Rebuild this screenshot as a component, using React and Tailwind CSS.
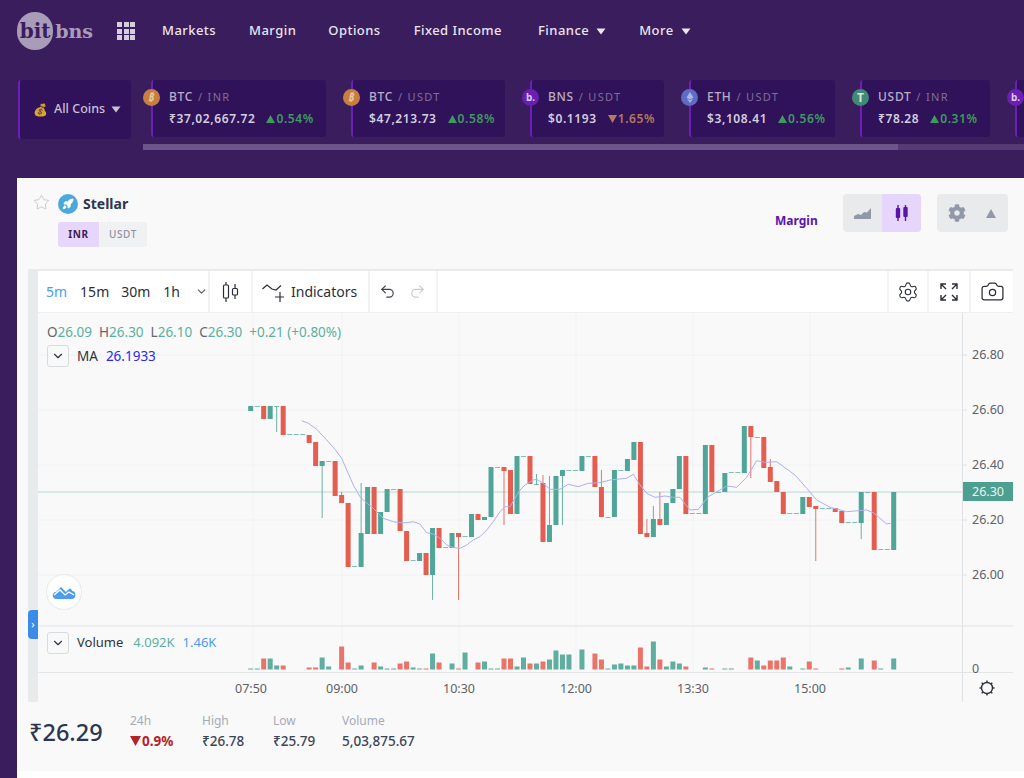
import React from "react";
import { ChevronDown, Settings, Camera, Undo2, Redo2, Star, Rocket } from "lucide-react";
import { FaCog } from "react-icons/fa";

const UI = '"Noto Sans", sans-serif';

// [colour, bodyTop, bodyBottom, wickTop, wickBottom]
const candles = [
  ["g", 406, 411], ["g", 406, 407], ["r", 406, 419], ["g", 406, 419], ["g", 406, 407, 406, 432], ["r", 406, 435],
  ["g", 434, 435], ["g", 434, 435], ["g", 434, 435], ["r", 435, 443], ["r", 442, 466], ["g", 461, 466, 461, 518],
  ["g", 461, 462], ["r", 461, 496], ["r", 495, 503, 492, 503], ["r", 503, 567], ["g", 566, 567], ["g", 533, 567, 483, 567],
  ["g", 487, 534], ["r", 487, 534], ["g", 512, 534], ["g", 489, 512], ["g", 489, 490], ["r", 489, 531],
  ["r", 531, 561], ["g", 560, 561], ["g", 553, 561], ["r", 553, 575], ["g", 528, 575, 528, 600], ["r", 528, 548],
  ["g", 547, 548], ["g", 533, 548], ["r", 533, 537, 533, 600], ["g", 536, 537], ["g", 514, 537], ["r", 514, 520],
  ["g", 517, 520], ["g", 467, 517], ["g", 467, 468], ["r", 467, 471, 467, 525], ["r", 470, 514], ["g", 456, 514],
  ["g", 456, 457], ["r", 456, 484], ["g", 484, 485, 474, 485], ["r", 483, 542, 475, 542], ["g", 525, 542, 476, 542], ["g", 476, 525],
  ["g", 470, 476, 470, 525], ["g", 470, 471], ["g", 470, 471], ["g", 456, 471], ["g", 456, 457], ["r", 456, 487],
  ["r", 487, 517, 470, 517], ["g", 517, 518], ["g", 470, 517], ["g", 470, 471], ["g", 459, 471], ["g", 442, 460],
  ["r", 442, 534], ["r", 533, 537, 519, 537], ["g", 519, 537, 506, 537], ["r", 519, 525, 492, 525], ["g", 503, 525], ["g", 489, 503],
  ["g", 456, 489], ["r", 456, 514], ["g", 513, 514], ["g", 513, 514], ["g", 445, 514], ["r", 445, 492],
  ["g", 492, 493], ["g", 473, 492], ["g", 472, 473], ["g", 472, 473], ["g", 426, 473], ["r", 426, 437, 426, 478],
  ["g", 437, 438], ["r", 437, 468], ["r", 467, 482, 459, 482], ["r", 481, 492], ["r", 492, 514], ["g", 513, 514],
  ["g", 513, 514], ["g", 497, 514], ["r", 497, 507], ["r", 506, 509, 506, 561], ["g", 508, 509], ["g", 508, 509],
  ["r", 508, 512], ["r", 511, 523], ["g", 522, 523], ["g", 522, 523], ["g", 492, 523, 492, 539], ["g", 492, 493],
  ["r", 492, 550], ["g", 549, 550], ["g", 549, 550], ["g", 492, 550],
];

// candle index, colour, height
const volume = [
  [0, "g", 1], [1, "g", 1], [2, "r", 11], [3, "g", 11], [4, "g", 4], [5, "r", 4], [9, "r", 2], [10, "r", 2],
  [11, "g", 12], [12, "g", 3], [14, "r", 23], [15, "r", 7], [16, "g", 1], [17, "g", 4], [19, "r", 7], [20, "g", 3],
  [21, "g", 1], [22, "g", 1], [23, "r", 6], [24, "r", 8], [25, "g", 2], [26, "g", 1], [27, "r", 1], [28, "g", 16],
  [29, "r", 7], [31, "g", 6], [32, "r", 1], [33, "g", 17], [35, "r", 7], [36, "g", 8], [37, "g", 1], [38, "g", 1],
  [39, "r", 11], [40, "r", 11], [41, "g", 3], [42, "g", 12], [43, "r", 6], [44, "g", 6], [45, "r", 8], [46, "g", 10],
  [47, "g", 19], [48, "g", 15], [49, "g", 15], [51, "g", 20], [53, "r", 16], [54, "r", 10], [55, "g", 1], [56, "g", 5],
  [57, "g", 6], [58, "g", 4], [59, "g", 4], [60, "r", 22], [61, "r", 3], [62, "g", 28], [63, "r", 10], [64, "g", 3],
  [65, "g", 8], [66, "g", 6], [67, "r", 3], [70, "g", 2], [71, "r", 1], [73, "g", 1], [74, "g", 1], [77, "r", 12],
  [78, "g", 9], [79, "r", 4], [80, "r", 9], [81, "r", 9], [82, "r", 12], [83, "g", 3], [85, "g", 1], [86, "r", 8],
  [87, "r", 1], [91, "r", 1], [92, "g", 2], [94, "g", 11], [96, "r", 9], [97, "g", 1], [99, "g", 11],
];

const maLine =
  "301.7,420.7 308.3,423.3 316.7,429.3 326.7,440 335,449.3 341.7,458.3 346.7,470 353.3,485 360,496.7 365,501.7 373.3,508.3 383.3,518.3 393.3,521.7 400,522.7 406.7,522.7 413.3,521.7 420,524 426.7,532.7 433.3,534 440,538.3 446.7,545 453.3,547.7 460,548.3 466.7,545 473.3,540 480,536.7 486.7,530 493.3,521.7 500,511.7 505,506.7 510,506.7 520,490 525,485 533.3,480 536.7,479.3 543.3,483.3 550,489.3 560,489.3 568.3,484.3 578.3,486.7 588.3,483.3 600,482.7 610,480 626.7,478.3 633.3,474.3 640,485 646.7,493.3 655,497.3 665,496 673.3,497.3 680,497.3 690,510 698.3,509.3 708.3,496.7 720,490 726.7,486 736.7,487.3 746.7,477.3 756.7,460.7 765,462.3 776.7,461.7 795,475 806.7,488.3 816.7,500 830,507.3 846.7,511.7 866.7,510 873.3,512.7 886.7,524 890.7,523.3";

const GREEN = "#4fa597";
const RED = "#e35d50";
const candleX = (i) => 250.7 + 6.495 * i;

const tickers = [
  { base: "BTC", quote: "INR", price: "₹37,02,667.72", pct: "0.54%", up: true, coin: "btc", w: "w-[175px]" },
  { base: "BTC", quote: "USDT", price: "$47,213.73", pct: "0.58%", up: true, coin: "btc", w: "w-[154px]" },
  { base: "BNS", quote: "USDT", price: "$0.1193", pct: "1.65%", up: false, coin: "bns", w: "w-[134px]" },
  { base: "ETH", quote: "USDT", price: "$3,108.41", pct: "0.56%", up: true, coin: "eth", w: "w-[146px]" },
  { base: "USDT", quote: "INR", price: "₹78.28", pct: "0.31%", up: true, coin: "usdt", w: "w-[130px]" },
  { base: "", quote: "", price: "", pct: "", up: true, coin: "bns", w: "w-[60px]" },
];

const CoinIcon = ({ coin }) => {
  if (coin === "btc")
    return (
      <span className="flex h-[17px] w-[17px] items-center justify-center rounded-full bg-[#c77f3f] text-[10px] font-bold italic text-[#e9c9a4]">₿</span>
    );
  if (coin === "eth")
    return (
      <span className="flex h-[17px] w-[17px] items-center justify-center rounded-full bg-[#5d6cc4]">
        <svg viewBox="0 0 10 14" className="h-[11px] w-[8px]">
          <path d="M5 0 L9.5 7 L5 9.5 L0.5 7 Z M5 10.6 L9 8.2 L5 14 L1 8.2 Z" fill="#aab4e6" />
        </svg>
      </span>
    );
  if (coin === "usdt")
    return (
      <span className="flex h-[17px] w-[17px] items-center justify-center rounded-full bg-[#3f8a74] text-[12px] font-bold text-[#d4e6de]">T</span>
    );
  return (
    <span className="flex h-[17px] w-[17px] items-center justify-center rounded-full bg-[#6a1fb0] text-[10px] font-bold text-[#d9c8ee]">b.</span>
  );
};

const Caret = ({ className }) => (
  <svg viewBox="0 0 10 7" className={className}>
    <path d="M0.5 0.5 H9.5 L5 6.5 Z" fill="currentColor" />
  </svg>
);

const Ticker = ({ t }) => (
  <div className={`relative h-[57px] shrink-0 rounded-[3px] border-l-2 border-[#6a20b5] bg-[#30125a] pl-4 pt-[8px] ${t.w}`}>
    <div className="absolute left-[-10px] top-[9px]">
      <CoinIcon coin={t.coin} />
    </div>
    {t.base && (
      <>
        <div className="text-[12px] font-medium leading-[18px] tracking-[0.06em] text-[#b9aec8]">
          {t.base} <span className="ml-[1px] text-[11px] font-normal tracking-[0.12em] text-[#7f6f96]">/ {t.quote}</span>
        </div>
        <div className="mt-[4px] flex items-center gap-[11px] whitespace-nowrap text-[12px] font-semibold leading-[18px] tracking-[0.05em] text-[#d3cede]">
          {t.price}
          <span className={`flex items-center gap-[1px] ${t.up ? "text-[#3f9a5e]" : "text-[#b57a5c]"}`}>
            <svg viewBox="0 0 8 7" className="h-[8px] w-[9px]">
              <path d={t.up ? "M4 0 L8 7 H0 Z" : "M0 0 H8 L4 7 Z"} fill="currentColor" />
            </svg>
            {t.pct}
          </span>
        </div>
      </>
    )}
  </div>
);

const ToolCell = ({ className, children }) => (
  <div className={`flex h-full items-center border-r-2 border-[#f1f3f4] ${className}`}>{children}</div>
);

const CollapseBtn = () => (
  <span className="flex h-[22px] w-[22px] items-center justify-center rounded-[3px] border border-[#d8dbdf] bg-[#f8f9f9]">
    <ChevronDown size={14} strokeWidth={2} className="text-[#2f3340]" />
  </span>
);

const ChartCanvas = () => (
  <svg viewBox="38 313 975 389" className="block h-[389px] w-[975px]">
    {/* grid */}
    {[355, 410, 465, 520, 575].map((y) => (
      <line key={y} x1="38" x2="962" y1={y} y2={y} stroke="#f0f3f4" />
    ))}
    {[253, 342, 459, 576, 693, 810].map((x) => (
      <line key={x} x1={x} x2={x} y1="313" y2="672" stroke="#eef2f4" />
    ))}
    {/* last price line */}
    <line x1="38" x2="962" y1="492" y2="492" stroke="#b3dcd2" />

    {/* candles */}
    {candles.map(([c, top, bot, wt, wb], i) => {
      const x = candleX(i);
      const fill = c === "g" ? GREEN : RED;
      const doji = bot - top <= 1;
      return (
        <g key={i}>
          {wt !== undefined && <line x1={x} x2={x} y1={wt} y2={wb} stroke={fill} strokeOpacity="0.85" />}
          <rect x={x - 2.5} y={top} width="5" height={bot - top} fill={fill} fillOpacity={doji ? 0.7 : 1} />
        </g>
      );
    })}
    <polyline points={maLine} fill="none" stroke="#aeb0f0" strokeWidth="1" />

    {/* volume pane */}
    {volume.map(([i, c, h]) => (
      <rect key={i} x={candleX(i) - 2.5} y={669.5 - h} width="5" height={h} fill={c === "g" ? "#5fae9f" : "#e8746a"} />
    ))}
    <line x1="38" x2="1013" y1="626" y2="626" stroke="#dfe2e4" />
    <line x1="38" x2="1013" y1="672.5" y2="672.5" stroke="#e3e5e7" />
    <line x1="962.5" x2="962.5" y1="313" y2="702" stroke="#dfe2e4" />

    {/* price scale */}
    {[
      ["26.80", 355],
      ["26.60", 410],
      ["26.40", 465],
      ["26.20", 520],
      ["26.00", 575],
    ].map(([label, y]) => (
      <g key={label}>
        <line x1="962" x2="967" y1={y} y2={y} stroke="#dfe2e4" />
        <text x="972" y={y + 4} fontSize="12.5" fill="#5e6168" fontFamily={UI}>{label}</text>
      </g>
    ))}
    <rect x="963" y="482" width="50" height="19" fill="#4d9f8f" />
    <text x="972" y="496" fontSize="12.5" fill="#eaf5f2" fontFamily={UI}>26.30</text>
    <text x="972" y="673" fontSize="12.5" fill="#5e6168" fontFamily={UI}>0</text>

    {/* time scale */}
    {[
      ["07:50", 251],
      ["09:00", 342],
      ["10:30", 459],
      ["12:00", 576],
      ["13:30", 693],
      ["15:00", 810],
    ].map(([label, x]) => (
      <text key={label} x={x} y="693" textAnchor="middle" fontSize="12.5" fill="#5e6168" fontFamily={UI}>{label}</text>
    ))}
    {/* sun icon */}
    <g transform="translate(987 688)" stroke="#2f3340" fill="none" strokeWidth="1.4">
      <circle r="5.5" />
      {[0, 45, 90, 135, 180, 225, 270, 315].map((a) => (
        <line key={a} x1="0" y1="-5.5" x2="0" y2="-7.5" transform={`rotate(${a})`} />
      ))}
    </g>
  </svg>
);

const Stat = ({ label, value, className }) => (
  <div className={className}>
    <div className="text-[12px] leading-[16px] text-[#a5abb8]">{label}</div>
    <div className="mt-[3px] text-[13.5px] font-medium leading-[18px] text-[#3c4456]">{value}</div>
  </div>
);

export default function App() {
  return (
    <div className="h-[778px] w-[1024px] overflow-hidden bg-[#3a1d5c]" style={{ fontFamily: UI }}>
      {/* nav */}
      <nav className="flex h-[62px] items-center pl-[17px]">
        <div className="flex w-[76px] items-center">
          <span className="flex h-[38px] w-[38px] items-center justify-center rounded-full bg-[#a99cb9] text-[20px] font-bold text-[#3a1d5c]" style={{ fontFamily: '"DejaVu Serif", serif' }}>bit</span>
          <span className="ml-[2px] text-[19px] font-bold text-[#a99cb9]" style={{ fontFamily: '"DejaVu Serif", serif' }}>bns</span>
        </div>
        <div className="ml-[24px] grid grid-cols-3 gap-[1.5px]">
          {Array.from({ length: 9 }).map((_, i) => (
            <span key={i} className="h-[5px] w-[5px] bg-[#d5cfdd]" />
          ))}
        </div>
        <div className="ml-[27px] flex items-center gap-[33px] text-[13px] font-medium tracking-[0.035em] text-[#e9e5ef]">
          <span>Markets</span>
          <span>Margin</span>
          <span className="ml-[-1px]">Options</span>
          <span>Fixed Income</span>
          <span className="ml-[3px] flex items-center gap-[7px]">Finance <Caret className="h-[7px] w-[10px]" /></span>
          <span className="flex items-center gap-[7px]">More <Caret className="h-[7px] w-[10px]" /></span>
        </div>
      </nav>

      {/* ticker strip */}
      <div className="ml-[18px] mt-[18px] flex items-start">
        <div className="flex h-[59px] w-[113px] shrink-0 items-center gap-[6px] rounded-[3px] border-l-2 border-[#6a20b5] bg-[#30125a] pl-[13px] text-[12.5px] font-medium text-[#c9c1d4]">
          <span className="text-[12px] opacity-80">💰</span>
          <span className="whitespace-nowrap">All Coins</span>
          <Caret className="h-[7px] w-[10px] shrink-0" />
        </div>
        <div className="ml-[20px] flex gap-[25px]">
          {tickers.map((t, i) => (
            <Ticker key={i} t={t} />
          ))}
        </div>
      </div>
      <div className="ml-[143px] mt-[5px] flex h-[6px]">
        <div className="w-[755px] bg-[#6e5588]" />
        <div className="flex-1 bg-[#553b72]" />
      </div>

      {/* main card */}
      <div className="ml-[17px] mt-[28px] h-[600px] rounded-tl-[3px] bg-white">
        <div className="h-[593px] bg-[#f9f9f9] pl-[11px]">
          <div className="relative flex h-[91px] items-start">
            <Star size={17} strokeWidth={1} className="absolute left-[5px] top-[16px] text-[#b4b8c0]" />
            <div className="absolute left-[30px] top-[15px] flex items-center gap-[5px]">
              <span className="flex h-[20px] w-[20px] items-center justify-center rounded-full bg-[#4aa8dc]">
                <Rocket size={12} className="fill-white text-white" />
              </span>
              <span className="text-[14px] font-bold text-[#2d3650]">Stellar</span>
            </div>
            <div className="absolute left-[30px] top-[44px] flex h-[25px] text-[10px] font-bold tracking-[0.06em]">
              <span className="flex w-[41px] items-center justify-center rounded-l-[3px] bg-[#e6d6fb] text-[#3a1d5c]">INR</span>
              <span className="flex w-[48px] items-center justify-center rounded-r-[3px] bg-[#f0f1f2] font-medium text-[#8c92a3]">USDT</span>
            </div>
            <span className="absolute left-[747px] top-[34px] text-[12px] font-bold text-[#5b14ab]">Margin</span>
            <div className="absolute left-[815px] top-[16px] flex h-[38px] w-[78px] overflow-hidden rounded-[4px] bg-[#e8eaec]">
              <span className="flex w-[39px] items-center justify-center">
                <svg viewBox="0 0 18 12" className="h-[12px] w-[18px]">
                  <path d="M0 12 V9 L4 7 L7 8 L10 5 L13 5.5 L17 1 V12 Z" fill="#9199a8" />
                </svg>
              </span>
              <span className="flex w-[39px] items-center justify-center bg-[#e6d6fb]">
                <svg viewBox="0 0 16 16" className="h-[16px] w-[16px]">
                  <path d="M4 0 V3 M4 13 V16 M11.5 0 V2 M11.5 12 V16" stroke="#5b14ab" strokeWidth="1.4" />
                  <rect x="1.8" y="3" width="4.4" height="10" rx="1" fill="#5b14ab" />
                  <rect x="9.3" y="2" width="4.4" height="10" rx="1" fill="#5b14ab" />
                </svg>
              </span>
            </div>
            <div className="absolute left-[909px] top-[16px] flex h-[38px] w-[71px] items-center rounded-[4px] bg-[#e8eaec]">
              <FaCog size={18} className="ml-[11px] text-[#9199a8]" />
              <svg viewBox="0 0 10 9" className="ml-[20px] h-[9px] w-[10px]">
                <path d="M5 0 L10 9 H0 Z" fill="#9199a8" />
              </svg>
            </div>
          </div>

          {/* chart widget */}
          <div className="w-[985px] border-t-2 border-[#e8eaeb] border-l-[10px]">
            <div className="flex h-[42px] items-center border-b border-[#edeff0] bg-white text-[14px] text-[#2b2e38]" style={{ width: 975 }}>
              <ToolCell className="w-[172px] pl-[8px]">
                <span className="text-[#4a9df0]">5m</span>
                <span className="ml-[13px]">15m</span>
                <span className="ml-[12px]">30m</span>
                <span className="ml-[13px]">1h</span>
                <ChevronDown size={13} strokeWidth={2} className="ml-[15px] text-[#555a66]" />
              </ToolCell>
              <ToolCell className="w-[43px] justify-center">
                <svg viewBox="0 0 18 22" className="h-[22px] w-[18px]" fill="none" stroke="#2b2e38" strokeWidth="1.2">
                  <rect x="1.5" y="4" width="5" height="13" rx="1" />
                  <path d="M4 1 V4 M4 17 V21 M13 3 V7.5 M13 14 V18" />
                  <rect x="10.5" y="7.5" width="5" height="6.5" rx="1" />
                </svg>
              </ToolCell>
              <ToolCell className="w-[117px] pl-[9px]">
                <svg viewBox="0 0 22 22" className="h-[22px] w-[22px]" fill="none" stroke="#2b2e38" strokeWidth="1.2">
                  <path d="M0.5 8 L5 4 L10 8 L14 9 L19 4.5" />
                  <path d="M18 11 V21 M13 16 H23" />
                </svg>
                <span className="ml-[7px]">Indicators</span>
              </ToolCell>
              <ToolCell className="w-[68px] pl-[9px]">
                <Undo2 size={17} strokeWidth={1.6} className="text-[#3b3e48]" />
                <Redo2 size={17} strokeWidth={1.6} className="ml-[13px] text-[#c8cbd0]" />
              </ToolCell>
              <div className="flex-1" />
              <ToolCell className="w-[42px] justify-center border-l-2">
                <Settings size={22} strokeWidth={1.2} className="text-[#2b2e38]" />
              </ToolCell>
              <ToolCell className="w-[42px] justify-center">
                <svg viewBox="0 0 20 20" className="h-[20px] w-[20px]" fill="none" stroke="#2b2e38" strokeWidth="1.4">
                  <path d="M2 7 V2 H7 M2 2 L7 7 M13 2 H18 V7 M18 2 L13 7 M2 13 V18 H7 M2 18 L7 13 M13 18 H18 V13 M18 18 L13 13" />
                </svg>
              </ToolCell>
              <div className="flex h-full w-[42px] items-center justify-center">
                <Camera size={25} strokeWidth={1.2} className="text-[#2b2e38]" />
              </div>
            </div>

            <div className="relative w-[975px]">
              <ChartCanvas />
              {/* legend over the chart */}
              <div className="absolute left-[9px] top-[10px] flex gap-[7px] text-[13.5px] leading-[18px] text-[#5bb09f]">
                <span><span className="text-[#636770]">O</span>26.09</span>
                <span><span className="text-[#636770]">H</span>26.30</span>
                <span><span className="text-[#636770]">L</span>26.10</span>
                <span><span className="text-[#636770]">C</span>26.30</span>
                <span>+0.21 (+0.80%)</span>
              </div>
              <div className="absolute left-[9px] top-[32px] flex items-center gap-[8px] text-[13.5px] text-[#2f3340]">
                <CollapseBtn />
                <span>MA</span>
                <span className="text-[#2a2af0]">26.1933</span>
              </div>
              <div className="absolute left-[8px] top-[261px] flex h-[36px] w-[36px] items-center justify-center rounded-full border border-[#e6e8ea] bg-white">
                <svg viewBox="0 0 24 14" className="h-[14px] w-[24px]">
                  <path d="M1 12 C0 9 2 7 4 7 L9 2 L14 7 L17 4 C19 3 20 5 20 6 C23 6 24 9 23 12 Q22 14 20 14 H4 Q2 14 1 12 Z" fill="#4a9df0" />
                  <path d="M2 10 L8 5 L13 10 L17 7 L22 10" stroke="#fff" strokeWidth="1.3" fill="none" />
                </svg>
              </div>
              <div className="absolute left-[9px] top-[319px] flex items-center gap-[8px] text-[13px] text-[#2f3340]">
                <CollapseBtn />
                <span>Volume</span>
                <span className="ml-[2px] text-[#5bb09f]">4.092K</span>
                <span className="text-[#4a9df0]">1.46K</span>
              </div>
              <div className="absolute left-[-10px] top-[297px] flex h-[29px] w-[10px] items-center justify-center rounded-l-[4px] bg-[#3d8be8] text-[11px] text-white">›</div>
            </div>
          </div>

          {/* bottom stats */}
          <div className="mt-[11px] flex items-center">
            <span className="ml-[1px] w-[101px] text-[23.5px] font-medium leading-[34px] text-[#2d3650]">₹26.29</span>
            <Stat
              className="w-[72px]"
              label="24h"
              value={
                <span className="flex items-center gap-[1px] font-bold text-[#b5232a]">
                  <svg viewBox="0 0 10 9" className="h-[10px] w-[11px]">
                    <path d="M0 0 H10 L5 9 Z" fill="currentColor" />
                  </svg>
                  0.9%
                </span>
              }
            />
            <Stat className="w-[71px]" label="High" value="₹26.78" />
            <Stat className="w-[69px]" label="Low" value="₹25.79" />
            <Stat label="Volume" value="5,03,875.67" />
          </div>
        </div>
      </div>
    </div>
  );
}
